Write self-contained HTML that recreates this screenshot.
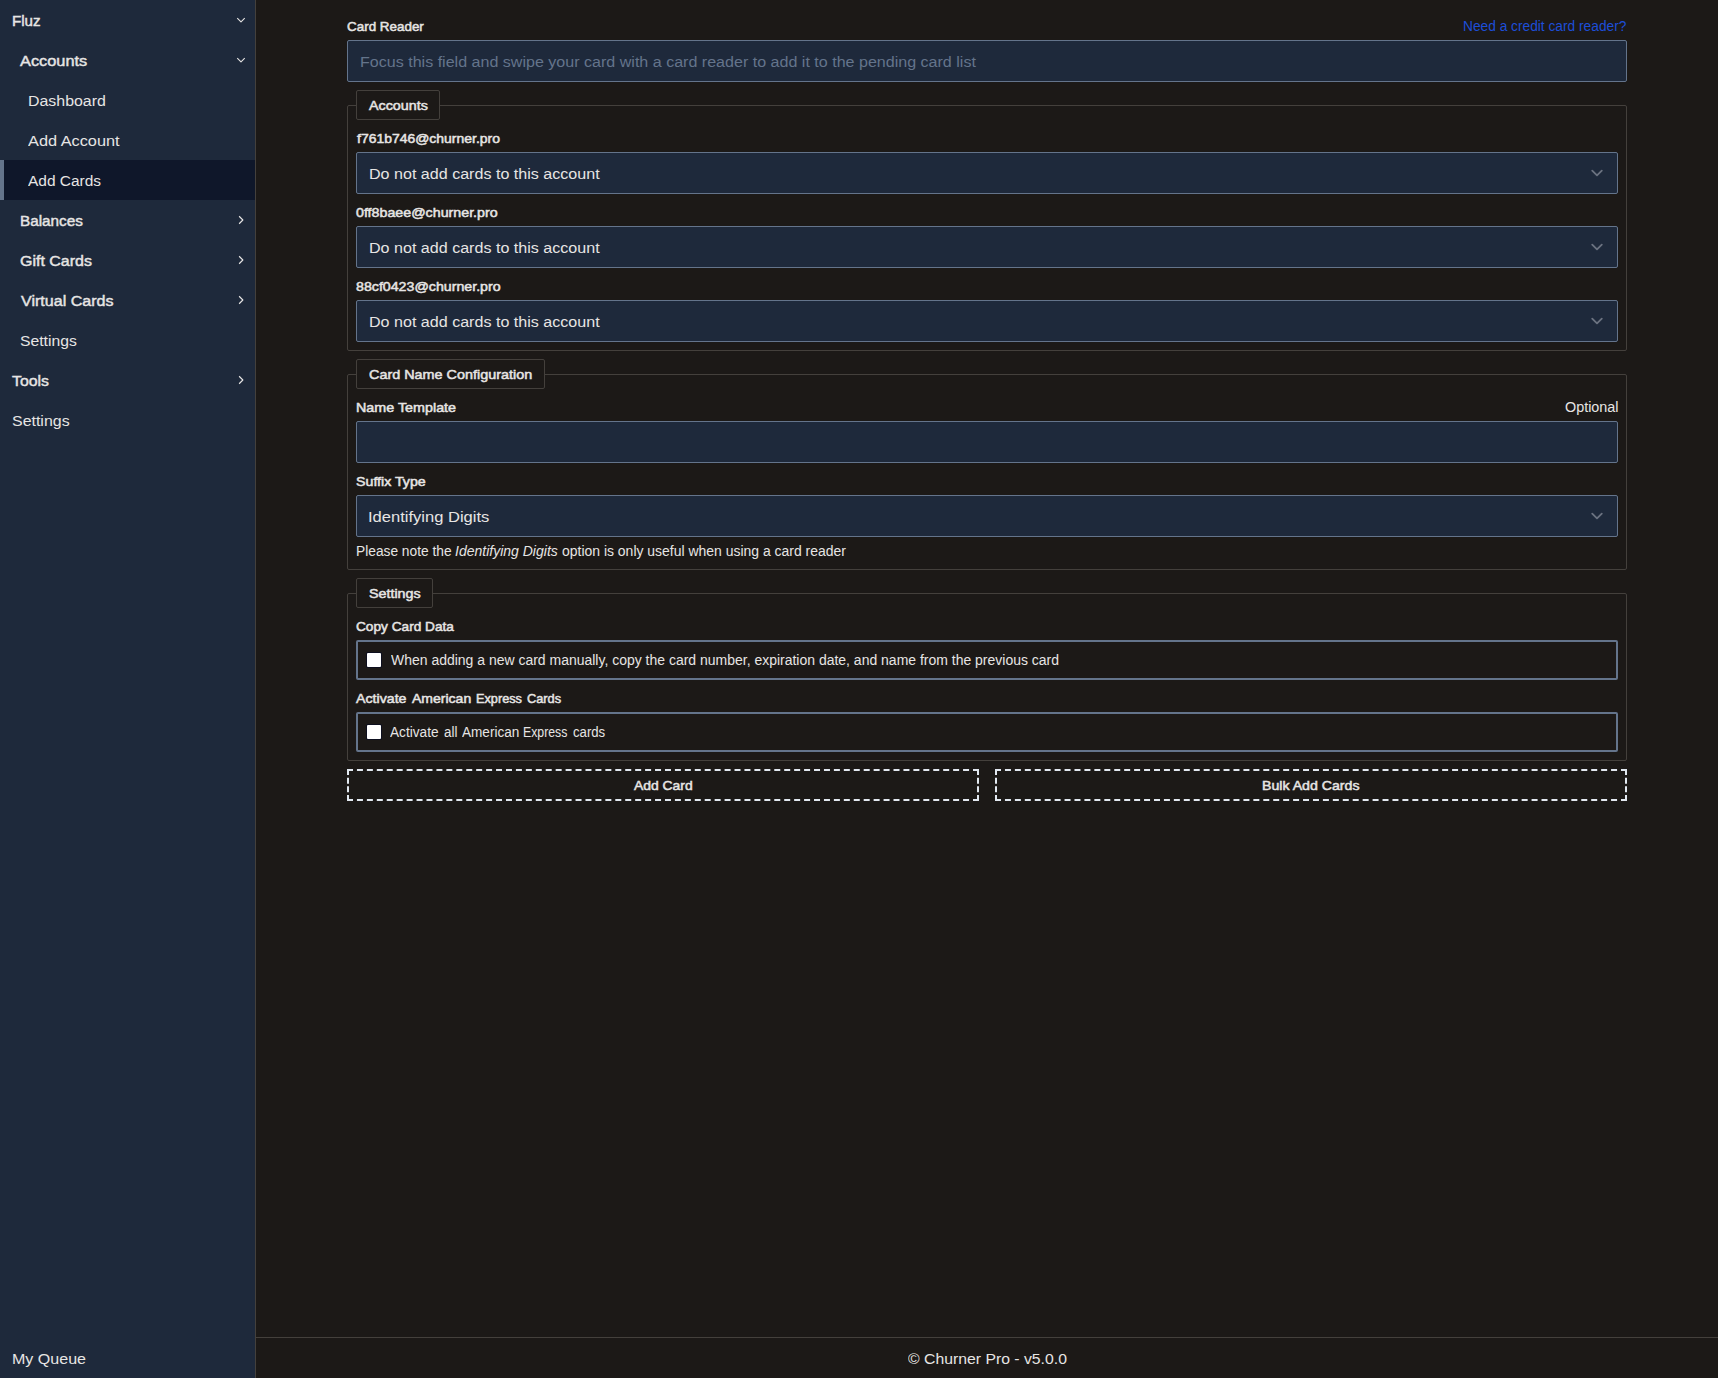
<!DOCTYPE html>
<html>
<head>
<meta charset="utf-8">
<title>Churner Pro</title>
<style>
*{box-sizing:border-box;margin:0;padding:0}
html,body{width:1718px;height:1378px;overflow:hidden;background:#1c1917}
body{font-family:"Liberation Sans",sans-serif;color:#e7e5e4;position:relative;font-size:15.5px}
.abs{position:absolute}
.t{position:absolute;white-space:nowrap;line-height:20px;height:20px;transform-origin:0 50%}
#side{position:absolute;left:0;top:0;width:256px;height:1378px;background:#1e293b;border-right:1px solid #44403c}
#side .t{font-size:15.5px;color:#e7e5e4}
.b{-webkit-text-stroke:0.45px #e7e5e4}
#active{position:absolute;left:0;top:160px;width:255px;height:40px;background:#0f172a;border-left:4px solid #64748b}
svg{position:absolute;overflow:visible}
.lbl{margin-top:1px;font-size:13.2px;color:#e7e5e4;-webkit-text-stroke:0.5px #e7e5e4}
.sm{font-size:14px;color:#e7e5e4}
.inp{position:absolute;background:#1e293b;border:1px solid #64748b;border-radius:2px;height:42px}
.fs{position:absolute;border:1px solid #44403c;border-radius:2px}
.lg{position:absolute;border:1px solid #44403c;border-radius:2px;background:#1c1917;height:30px}
.cb{position:absolute;border:2px solid #64748b;border-radius:2px;height:40px;left:356px;width:1262px}
.ck{position:absolute;left:9px;top:11px;width:14px;height:14px;background:#fff;border-radius:1px;box-shadow:0 0 0 1px rgba(4,8,36,0.6)}
.btn{position:absolute;border:2px dashed #e2e8f0;height:32px;top:769px;width:632px}
</style>
</head>
<body>
<div id="side">
  <div id="active"></div>
  <span class="t b" id="s1" style="left:12px;top:11px;transform:scaleX(0.9774)">Fluz</span>
  <span class="t b" id="s2" style="left:20px;top:51px;transform:scaleX(1.0550)">Accounts</span>
  <span class="t" id="s3" style="left:28px;top:91px;transform:scaleX(1.0268)">Dashboard</span>
  <span class="t" id="s4" style="left:28px;top:131px;transform:scaleX(1.0523)">Add Account</span>
  <span class="t" id="s5" style="left:28px;top:171px;transform:scaleX(0.9980)">Add Cards</span>
  <span class="t b" id="s6" style="left:20px;top:211px;transform:scaleX(0.9869)">Balances</span>
  <span class="t b" id="s7" style="left:20px;top:251px;transform:scaleX(1.0317)">Gift Cards</span>
  <span class="t b" id="s8" style="left:21px;top:291px;transform:scaleX(1.0366)">Virtual Cards</span>
  <span class="t" id="s9" style="left:20px;top:331px;transform:scaleX(1.0151)">Settings</span>
  <span class="t b" id="s10" style="left:12px;top:371px;transform:scaleX(1.0210)">Tools</span>
  <span class="t" id="s11" style="left:12px;top:411px;transform:scaleX(1.0284)">Settings</span>
  <span class="t" id="s12" style="left:12px;top:1349px;transform:scaleX(1.0354)">My Queue</span>
  <svg style="left:235px;top:14px" width="12" height="12" viewBox="0 0 24 24"><path d="M19.5 8.25l-7.5 7.5-7.5-7.5" fill="none" stroke="#e7e5e4" stroke-width="2.2" stroke-linecap="butt" stroke-linejoin="round"/></svg>
  <svg style="left:235px;top:54px" width="12" height="12" viewBox="0 0 24 24"><path d="M19.5 8.25l-7.5 7.5-7.5-7.5" fill="none" stroke="#e7e5e4" stroke-width="2.2" stroke-linecap="butt" stroke-linejoin="round"/></svg>
  <svg style="left:235px;top:214px" width="12" height="12" viewBox="0 0 24 24"><path d="M8.25 4.5l7.5 7.5-7.5 7.5" fill="none" stroke="#e7e5e4" stroke-width="2.2" stroke-linecap="butt" stroke-linejoin="round"/></svg>
  <svg style="left:235px;top:254px" width="12" height="12" viewBox="0 0 24 24"><path d="M8.25 4.5l7.5 7.5-7.5 7.5" fill="none" stroke="#e7e5e4" stroke-width="2.2" stroke-linecap="butt" stroke-linejoin="round"/></svg>
  <svg style="left:235px;top:294px" width="12" height="12" viewBox="0 0 24 24"><path d="M8.25 4.5l7.5 7.5-7.5 7.5" fill="none" stroke="#e7e5e4" stroke-width="2.2" stroke-linecap="butt" stroke-linejoin="round"/></svg>
  <svg style="left:235px;top:374px" width="12" height="12" viewBox="0 0 24 24"><path d="M8.25 4.5l7.5 7.5-7.5 7.5" fill="none" stroke="#e7e5e4" stroke-width="2.2" stroke-linecap="butt" stroke-linejoin="round"/></svg>
</div>

<!-- footer -->
<div class="abs" style="left:256px;top:1337px;width:1462px;height:1px;background:#44403c"></div>
<span class="t" id="f1" style="left:908px;top:1349px;transform:scaleX(1.0178)">© Churner Pro - v5.0.0</span>

<!-- card reader -->
<span class="t lbl" id="m1" style="left:347px;top:16px;transform:scaleX(1.0177)">Card Reader</span>
<span class="t sm" id="m2" style="left:1463px;top:16px;color:#1d4ed8;transform:scaleX(0.9810)">Need a credit card reader?</span>
<div class="inp" style="left:347px;top:40px;width:1280px"></div>
<span class="t" id="m3" style="left:360px;top:52px;color:#64748b;transform:scaleX(1.0360)">Focus this field and swipe your card with a card reader to add it to the pending card list</span>

<!-- accounts fieldset -->
<div class="fs" style="left:347px;top:105px;width:1280px;height:246px"></div>
<div class="lg" style="left:356px;top:90px;width:84px"></div>
<span class="t lbl" id="m4" style="left:369px;top:95px;transform:scaleX(1.0843)">Accounts</span>

<span class="t lbl" id="m5" style="left:357px;top:128px;transform:scaleX(1.0579)">f761b746@churner.pro</span>
<div class="inp" style="left:356px;top:152px;width:1262px"></div>
<span class="t" id="m6" style="left:369px;top:164px;transform:scaleX(1.0374)">Do not add cards to this account</span>
<svg style="left:1585px;top:161px" width="24" height="24" viewBox="0 0 20 20"><path d="M6 8l4 4 4-4" fill="none" stroke="#6b7280" stroke-width="1.5" stroke-linecap="round" stroke-linejoin="round"/></svg>

<span class="t lbl" id="m7" style="left:356px;top:202px;transform:scaleX(1.0796)">0ff8baee@churner.pro</span>
<div class="inp" style="left:356px;top:226px;width:1262px"></div>
<span class="t" id="m8" style="left:369px;top:238px;transform:scaleX(1.0374)">Do not add cards to this account</span>
<svg style="left:1585px;top:235px" width="24" height="24" viewBox="0 0 20 20"><path d="M6 8l4 4 4-4" fill="none" stroke="#6b7280" stroke-width="1.5" stroke-linecap="round" stroke-linejoin="round"/></svg>

<span class="t lbl" id="m9" style="left:356px;top:276px;transform:scaleX(1.0764)">88cf0423@churner.pro</span>
<div class="inp" style="left:356px;top:300px;width:1262px"></div>
<span class="t" id="m10" style="left:369px;top:312px;transform:scaleX(1.0374)">Do not add cards to this account</span>
<svg style="left:1585px;top:309px" width="24" height="24" viewBox="0 0 20 20"><path d="M6 8l4 4 4-4" fill="none" stroke="#6b7280" stroke-width="1.5" stroke-linecap="round" stroke-linejoin="round"/></svg>

<!-- card name config -->
<div class="fs" style="left:347px;top:374px;width:1280px;height:196px"></div>
<div class="lg" style="left:356px;top:359px;width:189px"></div>
<span class="t lbl" id="m11" style="left:369px;top:364px;transform:scaleX(1.0913)">Card Name Configuration</span>

<span class="t lbl" id="m12" style="left:356px;top:397px;transform:scaleX(1.0864)">Name Template</span>
<span class="t sm" id="m13" style="left:1565px;top:397px;transform:scaleX(1.0263)">Optional</span>
<div class="inp" style="left:356px;top:421px;width:1262px"></div>

<span class="t lbl" id="m14" style="left:356px;top:471px;transform:scaleX(1.0773)">Suffix Type</span>
<div class="inp" style="left:356px;top:495px;width:1262px"></div>
<span class="t" id="m15" style="left:368px;top:507px;transform:scaleX(1.0672)">Identifying Digits</span>
<svg style="left:1585px;top:504px" width="24" height="24" viewBox="0 0 20 20"><path d="M6 8l4 4 4-4" fill="none" stroke="#6b7280" stroke-width="1.5" stroke-linecap="round" stroke-linejoin="round"/></svg>
<span class="t sm" id="m16a" style="left:356px;top:541px;transform:scaleX(0.9824)">Please note the</span>
<span class="t sm" id="m16b" style="left:455px;top:541px;transform:scaleX(1.0007)"><i>Identifying Digits</i></span>
<span class="t sm" id="m16c" style="left:562px;top:541px;transform:scaleX(0.9969)">option is only useful when using a card reader</span>

<!-- settings -->
<div class="fs" style="left:347px;top:593px;width:1280px;height:168px"></div>
<div class="lg" style="left:356px;top:578px;width:77px"></div>
<span class="t lbl" id="m17" style="left:369px;top:583px;transform:scaleX(1.0845)">Settings</span>

<span class="t lbl" id="m18" style="left:356px;top:616px;transform:scaleX(1.0359)">Copy Card Data</span>
<div class="cb" style="top:640px"><div class="ck"></div></div>
<span class="t sm" id="m19" style="left:391px;top:650px;transform:scaleX(0.9985)">When adding a new card manually, copy the card number, expiration date, and name from the previous card</span>

<span class="t lbl" id="m20a" style="left:356px;top:688px;transform:scaleX(1.0766)">Activate</span>
<span class="t lbl" id="m20b" style="left:412px;top:688px;transform:scaleX(1.0627)">American</span>
<span class="t lbl" id="m20c" style="left:476px;top:688px;transform:scaleX(0.9641)">Express</span>
<span class="t lbl" id="m20d" style="left:527px;top:688px;transform:scaleX(0.9706)">Cards</span>
<div class="cb" style="top:712px"><div class="ck"></div></div>
<span class="t sm" id="m21a" style="left:390px;top:722px;transform:scaleX(0.9745)">Activate</span>
<span class="t sm" id="m21b" style="left:444px;top:722px;transform:scaleX(0.9563)">all</span>
<span class="t sm" id="m21c" style="left:462px;top:722px;transform:scaleX(0.9700)">American</span>
<span class="t sm" id="m21d" style="left:523px;top:722px;transform:scaleX(0.8781)">Express</span>
<span class="t sm" id="m21e" style="left:573px;top:722px;transform:scaleX(0.9409)">cards</span>

<!-- buttons -->
<div class="btn" style="left:347px"></div>
<span class="t lbl" id="m22" style="left:634px;top:775px;transform:scaleX(1.0536)">Add Card</span>
<div class="btn" style="left:995px"></div>
<span class="t lbl" id="m23" style="left:1262px;top:775px;transform:scaleX(1.0723)">Bulk Add Cards</span>
</body>
</html>
